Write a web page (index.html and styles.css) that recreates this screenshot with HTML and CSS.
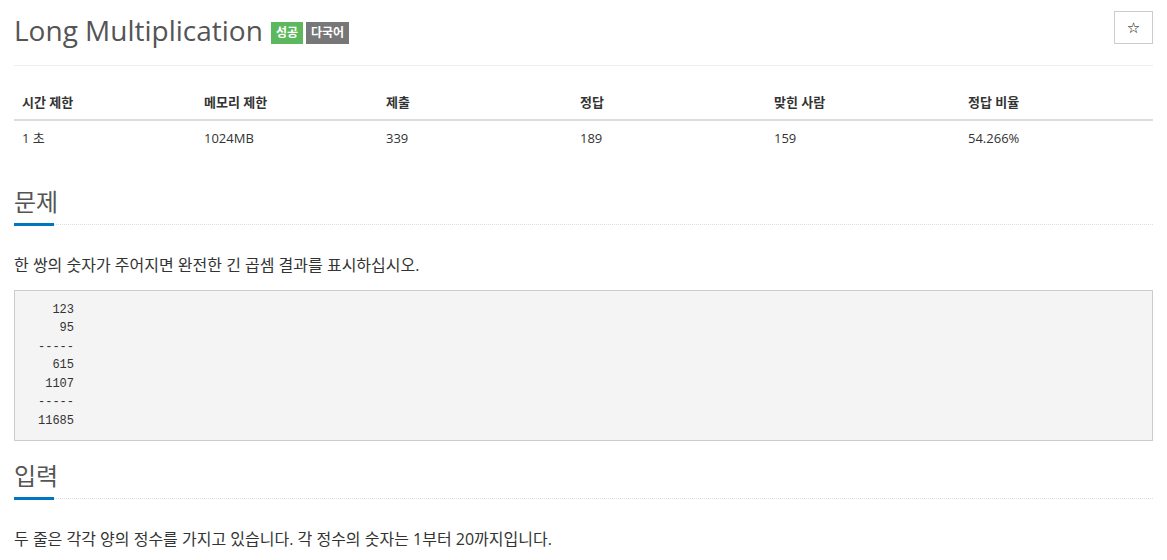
FILE: index.html
```html
<!DOCTYPE html>
<html lang="ko">

<head>
    <meta charset="UTF-8">
    <meta name="viewport" content="width=device-width, initial-scale=1.0">
    <title>Long Multiplication</title>
    <link rel="stylesheet" href="styles.css">
</head>

<body>
    <div class="container">
        <!-- 제목 -->
        <div class="page-header">
            <h1 class="title">
                <span>Long Multiplication</span>
                <span class="label label-success">성공</span>
                <span class="label label-default">다국어</span>
            </h1>
            <button class="btn-star" type="button">☆</button>
        </div>

        <!-- 문제 정보 -->
        <table class="info">
            <thead>
                <tr>
                    <th class="c1">시간 제한</th>
                    <th class="c2">메모리 제한</th>
                    <th class="c3">제출</th>
                    <th class="c4">정답</th>
                    <th class="c5">맞힌 사람</th>
                    <th class="c6">정답 비율</th>
                </tr>
            </thead>
            <tbody>
                <tr>
                    <td>1 초</td>
                    <td>1024MB</td>
                    <td>339</td>
                    <td>189</td>
                    <td>159</td>
                    <td>54.266%</td>
                </tr>
            </tbody>
        </table>

        <!-- 문제 -->
        <section class="problem-section">
            <div class="headline">
                <h2>문제</h2>
            </div>
            <p>한 쌍의 숫자가 주어지면 완전한 긴 곱셈 결과를 표시하십시오.</p>
            <pre>  123
   95
-----
  615
 1107
-----
11685</pre>
        </section>

        <!-- 입력 -->
        <section class="problem-section">
            <div class="headline">
                <h2>입력</h2>
            </div>
            <p>두 줄은 각각 양의 정수를 가지고 있습니다. 각 정수의 숫자는 1부터 20까지입니다.</p>
        </section>
    </div>
</body>

</html>
```

FILE: styles.css
```css
* {
    margin: 0;
    padding: 0;
    box-sizing: border-box;
}

body {
    font-family: "Open Sans", "Noto Sans CJK KR", sans-serif;
    font-size: 14px;
    line-height: 1.42857;
    color: #333;
    background-color: #fff;
}

.container {
    padding: 0 14px;
}

/* 제목 영역 */

.page-header {
    display: flex;
    justify-content: space-between;
    align-items: flex-start;
    padding: 10px 0 15px;
    border-bottom: 1px solid #eee;
}

.title {
    display: flex;
    align-items: center;
    font-size: 28px;
    font-weight: 400;
    line-height: 40px;
    color: #555;
}

.label {
    display: inline-block;
    margin-top: 6px;
    padding: 0 5px;
    height: 22px;
    line-height: 22px;
    font-size: 12px;
    font-weight: 700;
    color: #fff;
}

.label-success {
    margin-left: 8px;
    background-color: #5cb85c;
}

.label-default {
    margin-left: 3px;
    background-color: #777;
}

.btn-star {
    margin-top: 1px;
    width: 39px;
    height: 33px;
    background-color: #fff;
    border: 1px solid #ccc;
    font-family: "DejaVu Sans", sans-serif;
    font-size: 15px;
    color: #000;
}

/* 정보 테이블 */

.info {
    width: 100%;
    margin-top: 19px;
    margin-bottom: 31px;
    border-collapse: collapse;
    font-size: 13px;
}

.info th,
.info td {
    padding: 8px;
    text-align: left;
    line-height: 18px;
}

.info th {
    font-weight: 700;
    border-bottom: 2px solid #ddd;
}

.info td {
    color: #333;
}

.c1,
.c2 {
    width: 182px;
}

.c3,
.c4,
.c5 {
    width: 194px;
}

/* 본문 섹션 */

.problem-section {
    margin-top: 19px;
}

.headline {
    border-bottom: 1px dotted #ddd;
    margin-bottom: 28px;
}

.headline h2 {
    display: inline-block;
    font-size: 24px;
    font-weight: 400;
    line-height: 32px;
    color: #555;
    padding-bottom: 5px;
    border-bottom: 3px solid #0076c0;
    margin-bottom: -2px;
    width: 40px;
    white-space: nowrap;
}

.problem-section p {
    font-size: 16px;
    line-height: 24px;
    color: #333;
    margin-bottom: 13px;
}

pre {
    padding: 9.5px 23px;
    background-color: #f4f4f4;
    border: 1px solid #ccc;
    font-family: "Liberation Mono", monospace;
    font-size: 12px;
    line-height: 18.57px;
    color: #333;
    margin-bottom: 0;
}
```
